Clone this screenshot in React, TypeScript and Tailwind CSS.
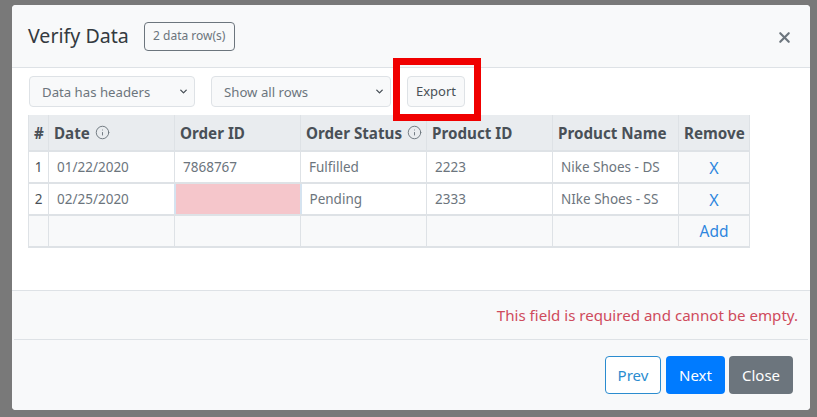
import { ChevronDown, Info, X } from "lucide-react";

const headers = [
  { label: "#", info: false },
  { label: "Date", info: true },
  { label: "Order ID", info: false },
  { label: "Order Status", info: true },
  { label: "Product ID", info: false },
  { label: "Product Name", info: false },
  { label: "Remove", info: false },
];

const rows = [
  { n: "1", date: "01/22/2020", id: "7868767", status: "Fulfilled", pid: "2223", name: "Nike Shoes - DS" },
  { n: "2", date: "02/25/2020", id: "", status: "Pending", pid: "2333", name: "NIke Shoes - SS" },
];

const cell = "border-x border-y-2 border-[#dee2e6] h-[32px] p-0 px-2 pt-[1px] text-[13.5px] text-[#6c757d] font-normal";

function FakeSelect({ label, width }: { label: string; width: string }) {
  return (
    <div className={`${width} h-[31px] flex items-center justify-between pl-[12px] pr-[5px] bg-[#f8f9fa] border border-[#dee2e6] rounded text-[13.2px] text-[#6c757d]`}>
      <span className="pt-[2px]">{label}</span>
      <ChevronDown size={11} strokeWidth={3} className="text-[#495057]" />
    </div>
  );
}

export default function App() {
  return (
    <div className="w-[817px] h-[417px] bg-[#797979] pt-[5px] pl-[12px] overflow-hidden font-['Noto_Sans',sans-serif]">
      <div className="relative w-[798px] h-[405px] bg-white rounded flex flex-col overflow-hidden">
        {/* Header */}
        <div className="h-[63px] shrink-0 bg-[#f8f9fa] border-b border-[#dee2e6] flex items-center pl-[16px] pr-[17px]">
          <h1 className="text-[19.6px] leading-none text-[#343a40] mr-[15px]">Verify Data</h1>
          <span className="w-[91px] h-[29px] flex items-center justify-center border border-[#6c757d] rounded text-[12px] text-[#6c757d]">
            2 data row(s)
          </span>
          <X size={17} strokeWidth={3} className="ml-auto text-[#6c757d] mt-[2px]" />
        </div>

        {/* Body */}
        <div className="flex-1 pt-[8px] pl-[16px]">
          <div className="flex items-center pl-[1px] mb-[8px]">
            <FakeSelect label="Data has headers" width="w-[166px]" />
            <div className="w-[16px]" />
            <FakeSelect label="Show all rows" width="w-[180px]" />
            <button className="ml-[16px] w-[58px] h-[31px] bg-[#f8f9fa] border border-[#dee2e6] rounded text-[13px] text-[#495057]">
              Export
            </button>
          </div>

          <table className="table-fixed border-collapse w-[721px]">
            <colgroup>
              <col className="w-[20px]" />
              <col className="w-[126px]" />
              <col className="w-[126px]" />
              <col className="w-[126px]" />
              <col className="w-[126px]" />
              <col className="w-[126px]" />
              <col className="w-[71px]" />
            </colgroup>
            <thead>
              <tr className="bg-[#e9ecef]">
                {headers.map((h) => (
                  <th key={h.label} className="border-x border-[#dee2e6] h-[36px] p-0 pl-[5px] pt-[1px] text-left text-[15.2px] font-bold text-[#495057] whitespace-nowrap">
                    <span className="inline-flex items-center gap-[5px]">
                      {h.label}
                      {h.info && <Info size={15} strokeWidth={1.5} className="text-[#6c757d]" />}
                    </span>
                  </th>
                ))}
              </tr>
            </thead>
            <tbody>
              {rows.map((r) => (
                <tr key={r.n}>
                  <td className={`${cell} !px-0 text-center !text-[#495057]`}>{r.n}</td>
                  <td className={cell}>{r.date}</td>
                  {r.id ? (
                    <td className={cell}>{r.id}</td>
                  ) : (
                    <td className="border-x-2 border-y-2 border-x-[#d5e3f0] border-t-[#cfe0f2] border-b-[#dee2e6] bg-[#f5c6cb] p-0" />
                  )}
                  <td className={cell}>{r.status}</td>
                  <td className={cell}>{r.pid}</td>
                  <td className={cell}>{r.name}</td>
                  <td className={`${cell} bg-[#f8f9fa] text-center !text-[16px] !text-[#2e86de]`}>X</td>
                </tr>
              ))}
              <tr className="bg-[#f8f9fa]">
                <td className={cell} />
                <td className={cell} />
                <td className={cell} />
                <td className={cell} />
                <td className={cell} />
                <td className={cell} />
                <td className={`${cell} text-center !text-[15.5px] !text-[#2e86de]`}>Add</td>
              </tr>
            </tbody>
          </table>
        </div>

        {/* Validation message */}
        <div className="h-[49px] shrink-0 bg-[#f8f9fa] border-t border-[#dee2e6] flex items-center justify-end pr-[12px] text-[15.1px] text-[#cf4b5c]">
          This field is required and cannot be empty.
        </div>

        {/* Footer */}
        <div className="h-[71px] shrink-0 bg-[#f8f9fa] pt-[17px] pr-[17px] flex justify-end items-start gap-[4px] relative">
          <div className="absolute top-0 left-[2px] right-[2px] border-t border-[#dee2e6]" />
          <button className="w-[56px] h-[38px] mr-[1px] border border-[#2b8ccf] rounded text-[15px] text-[#2b8ccf] bg-white">Prev</button>
          <button className="w-[59px] h-[38px] rounded text-[15px] text-white bg-[#007bff]">Next</button>
          <button className="w-[64px] h-[38px] rounded text-[15px] text-white bg-[#6c757d]">Close</button>
        </div>

        {/* Annotation around Export */}
        <div className="absolute left-[381px] top-[53px] w-[88px] h-[63px] border-[7px] border-[#f00000]" />
      </div>
    </div>
  );
}
